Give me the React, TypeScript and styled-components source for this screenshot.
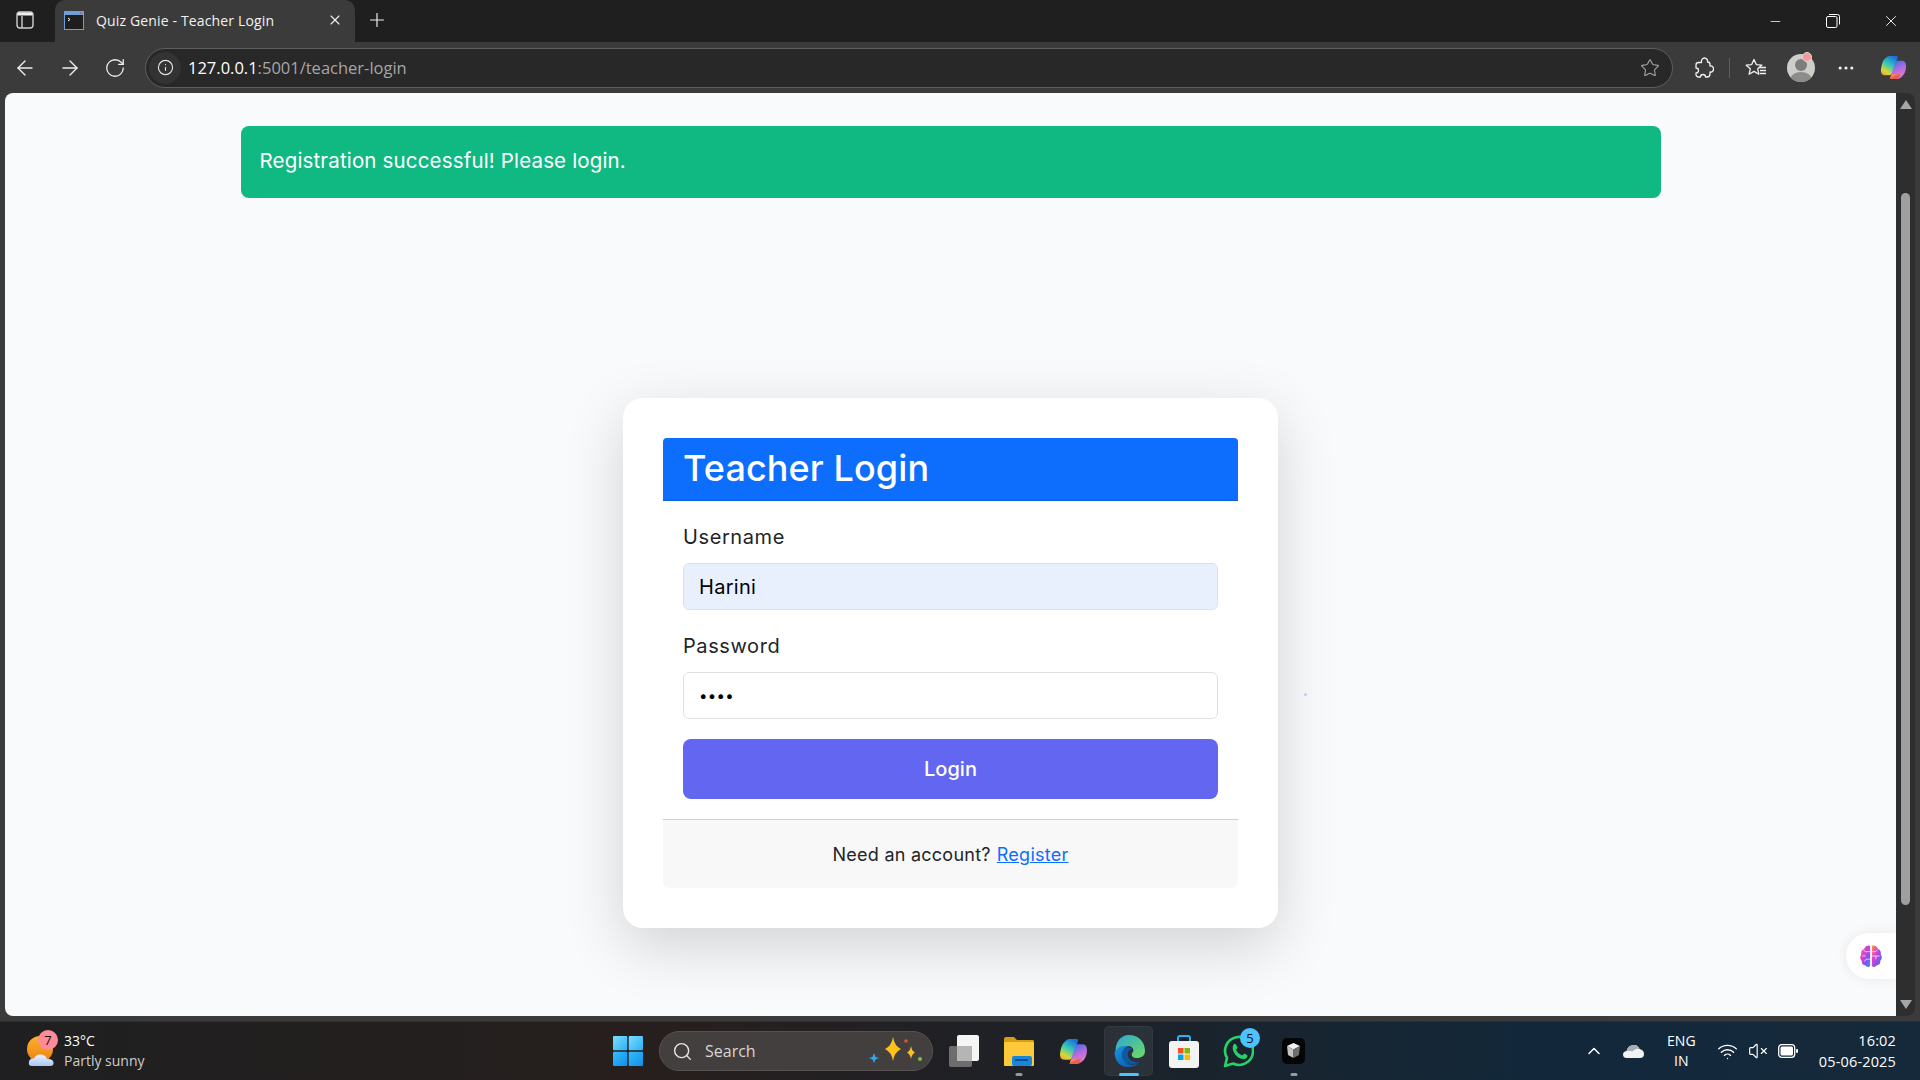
import React, { useId } from "react";
import styled, { createGlobalStyle } from "styled-components";
import {
  ArrowLeft,
  ArrowRight,
  ChevronUp,
  Info,
  Minus,
  MoreHorizontal,
  Plus,
  RotateCw,
  Search,
  Star,
  VolumeX,
  Wifi,
  X,
} from "lucide-react";

const GlobalStyle = createGlobalStyle`
  html, body {
    margin: 0;
    padding: 0;
    height: 100%;
    overflow: hidden;
    background: #3b3b3b;
  }
  * { box-sizing: border-box; }
`;

const pageFont = `Inter, "Noto Sans", sans-serif`;
const shellFont = `"Open Sans", "Noto Sans", sans-serif`;

const Screen = styled.div`
  width: 1920px;
  height: 1080px;
  display: flex;
  flex-direction: column;
  overflow: hidden;
  font-family: ${shellFont};
`;

/* browser chrome */
const TabStrip = styled.div`
  height: 42px;
  flex: none;
  background: #1f1f1f;
  display: flex;
  align-items: stretch;
  color: #fff;
`;

const SideToggle = styled.div`
  width: 55px;
  display: flex;
  align-items: center;
  justify-content: center;
  padding: 0 6px 2px 0;
`;

const Tab = styled.div`
  width: 300px;
  background: #3b3b3b;
  border-radius: 10px 10px 0 0;
  display: flex;
  align-items: center;
  padding: 0 12px 2px 9px;
  gap: 12px;
`;

const TabTitle = styled.span`
  flex: 1;
  font-size: 14px;
  color: #f2f2f2;
  letter-spacing: 0.15px;
  white-space: nowrap;
`;

const NewTab = styled.div`
  width: 44px;
  display: flex;
  align-items: center;
  justify-content: center;
  padding-bottom: 2px;
`;

const WindowControls = styled.div`
  margin-left: auto;
  display: flex;
  align-items: center;
`;

const WindowButton = styled.div`
  width: 58px;
  height: 40px;
  display: flex;
  align-items: center;
  justify-content: center;
`;

const Toolbar = styled.div`
  height: 51px;
  flex: none;
  background: #3b3b3b;
  display: flex;
  align-items: center;
  color: #f0f0f0;
`;

const NavButton = styled.div<{ $w: number }>`
  width: ${(p) => p.$w}px;
  height: 40px;
  flex: none;
  display: flex;
  align-items: center;
  justify-content: center;
  position: relative;
`;

const AddressBar = styled.div`
  width: 1528px;
  height: 40px;
  margin: 0 6px 0 5px;
  flex: none;
  background: #282828;
  border: 1px solid #5e5e5e;
  border-radius: 20px;
  display: flex;
  align-items: center;
  padding: 0 12px 0 3px;
`;

const SiteInfo = styled.div`
  width: 32px;
  height: 32px;
  border-radius: 50%;
  background: #333;
  display: flex;
  align-items: center;
  justify-content: center;
  margin-right: 7px;
`;

const Url = styled.div`
  flex: 1;
  font-size: 16.5px;
  color: #a6a6a6;
  white-space: nowrap;
`;

const UrlHost = styled.span`
  color: #fff;
`;

const ToolbarDivider = styled.div`
  width: 1px;
  height: 20px;
  background: #5e5e5e;
  flex: none;
`;

const Avatar = styled.div`
  width: 28px;
  height: 28px;
  border-radius: 50%;
  background: #cfcdc9;
  overflow: hidden;
  display: flex;
`;

const AvatarDot = styled.div`
  position: absolute;
  top: 4px;
  right: 8px;
  width: 10px;
  height: 10px;
  border-radius: 50%;
  background: #f59a9a;
  border: 1px solid #d9d9d9;
`;

/* web page */
const Viewport = styled.div`
  flex: 1;
  min-height: 0;
  display: flex;
  padding: 0 5px 5px 5px;
  background: #3b3b3b;
`;

const Page = styled.main`
  flex: 1;
  background: #f9fafc;
  border-radius: 8px 0 0 8px;
  padding-top: 33px;
  position: relative;
  font-family: ${pageFont};
  overflow: hidden;
`;

const Alert = styled.div`
  width: 1420px;
  height: 72px;
  margin: 0 auto;
  background: #10b981;
  border-radius: 8px;
  color: #fff;
  font-size: 20.5px;
  line-height: 70px;
  letter-spacing: 0.16px;
  padding-left: 19px;
`;

const Card = styled.section`
  width: 655px;
  margin: 200px auto 0;
  background: #fff;
  border-radius: 20px;
  padding: 40px;
  box-shadow: 0 18px 60px rgba(0, 0, 0, 0.16);
`;

const CardHeader = styled.h1`
  margin: 0;
  height: 63px;
  background: #0d6efd;
  border-radius: 4px 4px 0 0;
  color: #fff;
  font-size: 36px;
  font-weight: 500;
  line-height: 61px;
  padding-left: 20px;
  letter-spacing: 0.1px;
  border-bottom: 1px solid #0b62e0;
`;

const CardBody = styled.div`
  padding: 20px;
`;

const Field = styled.div`
  margin-bottom: 20px;
`;

const Label = styled.label`
  display: block;
  height: 30px;
  line-height: 32px;
  margin-bottom: 12px;
  font-size: 20px;
  letter-spacing: 0.6px;
  color: #212529;
`;

const Input = styled.input<{ $filled?: boolean; $masked?: boolean }>`
  display: block;
  width: 100%;
  height: 47px;
  border: 1px solid #dee2e6;
  border-radius: 6px;
  padding: 0 15px;
  font-family: ${pageFont};
  font-size: ${(p) => (p.$masked ? 15 : 20)}px;
  letter-spacing: 0.3px;
  color: #000;
  background: ${(p) => (p.$filled ? "#e8f0fe" : "#fff")};
  outline: none;
`;

const LoginButton = styled.button`
  display: block;
  width: 100%;
  height: 60px;
  border: 0;
  border-radius: 8px;
  background: #6366f1;
  color: #fff;
  font-family: ${pageFont};
  font-size: 20px;
  font-weight: 500;
`;

const CardFooter = styled.div`
  height: 69px;
  background: #f8f8f8;
  border-top: 1px solid #cfcfcf;
  border-radius: 0 0 6px 6px;
  display: flex;
  align-items: center;
  justify-content: center;
  gap: 6px;
  font-size: 18px;
  letter-spacing: 0.25px;
  color: #212529;
`;

const RegisterLink = styled.a`
  color: #0d6efd;
  text-decoration: underline;
`;

const BrainTab = styled.div`
  position: absolute;
  right: 0;
  top: 840px;
  width: 50px;
  height: 46px;
  background: #fff;
  border-radius: 23px 0 0 23px;
  box-shadow: 0 0 12px rgba(0, 0, 0, 0.08);
  display: flex;
  align-items: center;
  justify-content: center;
`;

const StrayDot = styled.div`
  position: absolute;
  left: 1299px;
  top: 600px;
  width: 3px;
  height: 3px;
  border-radius: 50%;
  background: #c3cdf3;
`;

const Scrollbar = styled.div`
  width: 19px;
  flex: none;
  background: #2e2e2e;
  border-radius: 0 8px 8px 0;
  display: flex;
  flex-direction: column;
  align-items: center;
  justify-content: space-between;
  padding: 7px 0;
`;

const ScrollThumb = styled.div`
  flex: 1;
  width: 9px;
  margin: 84px 0 95px;
  border-radius: 5px;
  background: #9f9f9f;
`;

const ScrollArrow = styled.div<{ $down?: boolean }>`
  width: 0;
  height: 0;
  border-left: 6.5px solid transparent;
  border-right: 6.5px solid transparent;
  ${(p) =>
    p.$down
      ? "border-top: 9px solid #a5a5a5;"
      : "border-bottom: 9px solid #a5a5a5;"}
`;

/* taskbar */
const Taskbar = styled.footer`
  height: 59px;
  flex: none;
  background: linear-gradient(90deg, #1f1f21 0%, #271f1e 35%, #1c2229 58%, #12283a 80%, #15293a 100%);
  display: grid;
  grid-template-columns: 600px auto 1fr;
  align-items: center;
  color: #fff;
  border-top: 1px solid #2e2e2e;
`;

const Weather = styled.div`
  display: flex;
  align-items: center;
  padding-left: 27px;
  gap: 9px;
`;

const WeatherIcon = styled.div`
  width: 28px;
  height: 40px;
  position: relative;
  flex: none;
`;

const AlertBadge = styled.div`
  position: absolute;
  top: -1px;
  left: 11px;
  width: 20px;
  height: 20px;
  border-radius: 50%;
  background: #ff8a98;
  color: #111;
  font-size: 13px;
  text-align: center;
  line-height: 20px;
`;

const WeatherText = styled.div`
  font-size: 14px;
  line-height: 20px;
`;

const WeatherSub = styled.div`
  color: #cdcdcd;
`;

const TaskCenter = styled.div`
  display: flex;
  align-items: center;
`;

const TaskSlot = styled.div<{ $active?: boolean }>`
  width: 55px;
  height: 50px;
  display: flex;
  align-items: center;
  justify-content: center;
  position: relative;
  &::before {
    content: "";
    position: absolute;
    inset: 0 3px;
    border-radius: 5px;
    ${(p) =>
      p.$active
        ? "background: rgba(255,255,255,0.07); box-shadow: inset 0 0 0 1px rgba(255,255,255,0.04);"
        : ""}
  }
  > svg {
    position: relative;
  }
`;

const RunningMark = styled.div<{ $active?: boolean }>`
  position: absolute;
  bottom: 0;
  left: 50%;
  transform: translateX(-50%);
  height: 3px;
  border-radius: 2px;
  width: ${(p) => (p.$active ? 20 : 7)}px;
  background: ${(p) => (p.$active ? "#4cc2ff" : "#9a9a9a")};
`;

const CountBadge = styled.div`
  position: absolute;
  top: 2px;
  right: 6px;
  width: 20px;
  height: 20px;
  border-radius: 50%;
  background: #4cc2ff;
  color: #111;
  font-size: 13px;
  text-align: center;
  line-height: 20px;
`;

const SearchPill = styled.div`
  width: 274px;
  height: 40px;
  margin: 0 3px 0 4px;
  border-radius: 20px;
  background: #433f3f;
  border: 1px solid #565252;
  display: flex;
  align-items: center;
  padding: 0 8px 0 12px;
  gap: 12px;
  font-size: 16px;
  color: #d6d6d6;
`;

const SearchHint = styled.div`
  margin-left: auto;
  display: flex;
`;

const Tray = styled.div`
  display: flex;
  align-items: center;
  justify-content: flex-end;
  padding-right: 24px;
`;

const TrayItem = styled.div<{ $w: number }>`
  width: ${(p) => p.$w}px;
  display: flex;
  align-items: center;
  justify-content: center;
`;

const Lang = styled.div`
  font-size: 14px;
  line-height: 20px;
  text-align: center;
`;

const Clock = styled.div`
  font-size: 14.5px;
  line-height: 21px;
  text-align: right;
  margin-left: 14px;
  letter-spacing: 0.15px;
`;

const WeatherArtBox = styled.svg`
  position: absolute;
  inset: 0;
`;

/* drawn icons */
function SidebarIcon() {
  return (
    <svg width="18" height="18" viewBox="0 0 18 18" fill="none">
      <rect x="1" y="1" width="16" height="16" rx="3" stroke="#cfcfcf" strokeWidth="1.4" />
      <path d="M1.5 4.5V3.5a2 2 0 0 1 2-2H14.5a2 2 0 0 1 2 2V4.5Z" fill="#f0f0f0" />
      <path d="M6 5V17" stroke="#cfcfcf" strokeWidth="1.4" />
    </svg>
  );
}

function Favicon() {
  return (
    <svg width="20" height="19" viewBox="0 0 20 19">
      <rect x="0.5" y="0.5" width="19" height="18" fill="#1e1e1e" stroke="#6f9fd8" />
      <rect x="1" y="1" width="18" height="3" fill="#6f9fd8" />
      <rect x="16" y="1" width="2" height="2" fill="#e05a5a" />
      <path d="M4 7L6 8.5L4 10" stroke="#fff" strokeWidth="1" fill="none" />
    </svg>
  );
}

function RestoreIcon() {
  return (
    <svg width="14" height="14" viewBox="0 0 14 14" fill="none" stroke="#fff" strokeWidth="1">
      <rect x="0.5" y="2.5" width="10.5" height="11" rx="1.5" />
      <path d="M3 0.5H11.5a2 2 0 0 1 2 2V10.5" />
    </svg>
  );
}

function ExtensionsIcon() {
  return (
    <svg width="20" height="21" viewBox="0 0 20 21" fill="none" stroke="#f0f0f0" strokeWidth="1.3" strokeLinejoin="round">
      <path d="M4.5 5.5H7.5C7 3 8.5 1 10.5 1S14 3 13.5 5C15 5 16 6 16 7.5V9C18 8.5 19.5 10 19.5 12S18 15.5 16 15V17C16 19 15 20 13 20H11.5C11.5 18.5 10.5 17.5 9 17.5S6.5 18.5 6.5 20H4.5C3 20 2 19 2 17.5V16C3.5 16 4.5 15 4.5 13.5S3.5 11 2 11V8C2 6.5 3 5.5 4.5 5.5Z" />
    </svg>
  );
}

function FavoritesIcon() {
  return (
    <svg width="22" height="20" viewBox="0 0 22 20" fill="none" stroke="#f0f0f0" strokeWidth="1.3" strokeLinejoin="round">
      <path d="M9 1.5L11.3 6.6L16.8 7.2L12.7 10.8L13.9 16.2L9 13.4L4.1 16.2L5.3 10.8L1.2 7.2L6.7 6.6Z" />
      <path d="M14 9.5H21M15 12.5H21M15 15.5H21" />
    </svg>
  );
}

function AvatarFigure() {
  return (
    <svg width="28" height="28" viewBox="0 0 28 28">
      <circle cx="14" cy="11" r="6" fill="#7d7d7d" />
      <ellipse cx="14" cy="25" rx="10.5" ry="7" fill="#8c8c8c" />
    </svg>
  );
}

function CopilotIcon({ size }: { size: number }) {
  const id = useId();
  return (
    <svg width={size} height={size} viewBox="0 0 28 28">
      <defs>
        <linearGradient id={`${id}a`} x1="0.7" y1="0" x2="0.2" y2="1">
          <stop offset="0" stopColor="#1a6fe0" />
          <stop offset="0.45" stopColor="#35c9b4" />
          <stop offset="0.8" stopColor="#d5d83a" />
          <stop offset="1" stopColor="#f2a63a" />
        </linearGradient>
        <linearGradient id={`${id}b`} x1="0.3" y1="0" x2="0.7" y2="1">
          <stop offset="0" stopColor="#3b6ee8" />
          <stop offset="0.45" stopColor="#b06be0" />
          <stop offset="1" stopColor="#f07cc0" />
        </linearGradient>
        <linearGradient id={`${id}c`} x1="0" y1="0" x2="1" y2="1">
          <stop offset="0" stopColor="#f8c24a" />
          <stop offset="0.5" stopColor="#f0603e" />
          <stop offset="1" stopColor="#d84fa0" />
        </linearGradient>
      </defs>
      <path d="M10 2H17Q19 2 18 5L13 19Q12 22 9 22H5Q0.5 22 1 16Q2 7 6 4Q8 2 10 2Z" fill={`url(#${id}a)`} />
      <path d="M18 7H23Q27 7 27 13Q27 20 22 24Q20 26 17 26H12Q10 26 11 23L16 9Q16.5 7 18 7Z" fill={`url(#${id}b)`} />
      <path d="M10 26H17Q19.5 26 20.5 24L21 21H14Q12 21 11.5 22.5L10.5 25Z" fill={`url(#${id}c)`} />
    </svg>
  );
}

function BrainIcon() {
  const id = useId();
  return (
    <svg width="26" height="26" viewBox="0 0 24 24">
      <defs>
        <linearGradient id={id} x1="0" y1="0" x2="1" y2="1">
          <stop offset="0" stopColor="#ff9a2e" />
          <stop offset="0.35" stopColor="#e23fd0" />
          <stop offset="0.7" stopColor="#7a55f0" />
          <stop offset="1" stopColor="#3f8ef5" />
        </linearGradient>
      </defs>
      <path d="M11.2 2.5V21.5Q8.5 23 6.5 20.5Q3 20 3.5 16.5Q0.8 13.5 3 10.5Q2.3 6.5 5.5 5.5Q7.5 1.5 11.2 2.5Z" fill={`url(#${id})`} />
      <path d="M12.8 2.5V21.5Q15.5 23 17.5 20.5Q21 20 20.5 16.5Q23.2 13.5 21 10.5Q21.7 6.5 18.5 5.5Q16.5 1.5 12.8 2.5Z" fill={`url(#${id})`} />
      <path d="M11 8H7L5 6.5M11 15H7.5L6 17M4 12H7M13 8H16L18 6.5M13 12H20M16.5 12V15" stroke="#fff" strokeWidth="0.8" fill="none" opacity="0.8" />
    </svg>
  );
}

function WeatherArt() {
  return (
    <WeatherArtBox width="28" height="40" viewBox="0 0 28 40">
      <defs>
        <linearGradient id="sun" x1="0" y1="0" x2="0" y2="1">
          <stop offset="0" stopColor="#fbb428" />
          <stop offset="1" stopColor="#ee7f14" />
        </linearGradient>
        <linearGradient id="cloud" x1="0" y1="0" x2="0" y2="1">
          <stop offset="0" stopColor="#eef4ff" />
          <stop offset="1" stopColor="#a9c6f2" />
        </linearGradient>
      </defs>
      <circle cx="13" cy="18" r="13" fill="url(#sun)" />
      <path d="M5 35Q1 35 2 30.5Q3 27 7 27.5Q9 23 14 23.5Q19 24 20 28Q26 27.5 26.5 31.5Q27 35 23 35Z" fill="url(#cloud)" />
    </WeatherArtBox>
  );
}

function WindowsLogo() {
  return (
    <svg width="30" height="30" viewBox="0 0 30 30">
      <defs>
        <linearGradient id="winTop" x1="0" y1="0" x2="1" y2="1">
          <stop offset="0" stopColor="#7fdcff" />
          <stop offset="1" stopColor="#2bb1f5" />
        </linearGradient>
        <linearGradient id="winBottom" x1="0" y1="0" x2="1" y2="1">
          <stop offset="0" stopColor="#35bdfb" />
          <stop offset="1" stopColor="#0f8fe8" />
        </linearGradient>
      </defs>
      <rect x="0" y="0" width="14.3" height="14.3" rx="1" fill="url(#winTop)" />
      <rect x="15.7" y="0" width="14.3" height="14.3" rx="1" fill="url(#winTop)" />
      <rect x="0" y="15.7" width="14.3" height="14.3" rx="1" fill="url(#winBottom)" />
      <rect x="15.7" y="15.7" width="14.3" height="14.3" rx="1" fill="url(#winBottom)" />
    </svg>
  );
}

function SearchSparkles() {
  return (
    <svg width="56" height="34" viewBox="0 0 56 34">
      <path d="M25 3Q26.5 12 33 15Q26.5 18 25 27Q23.5 18 17 15Q23.5 12 25 3Z" fill="#fcc21b" />
      <path d="M43 12Q43.8 17 47 18.5Q43.8 20 43 25Q42.2 20 39 18.5Q42.2 17 43 12Z" fill="#fcc21b" />
      <path d="M6 19L7.5 23L11 24L7.5 25.5L6 29L4.5 25.5L1 24L4.5 23Z" fill="#35a7ef" />
      <circle cx="38" cy="7" r="1.8" fill="#d9572b" />
      <circle cx="52" cy="25" r="2" fill="#7cc142" />
    </svg>
  );
}

function TaskViewIcon() {
  return (
    <svg width="30" height="32" viewBox="0 0 30 32">
      <rect x="0" y="11" width="23" height="21" rx="2" fill="#6d6d6d" />
      <rect x="8" y="0" width="22" height="26" rx="2" fill="#f5f5f5" />
      <rect x="8" y="11" width="15" height="15" fill="#b5b5b5" />
    </svg>
  );
}

function FolderIcon() {
  return (
    <svg width="30" height="30" viewBox="0 0 30 30">
      <path d="M0 3Q0 1 2 1H10L13 4H29Q30 4 30 6V10H0Z" fill="#d89c12" />
      <rect x="0" y="6" width="30" height="24" rx="1" fill="#fcc93a" />
      <rect x="8" y="20" width="20" height="10" rx="2" fill="#1a86d8" />
      <rect x="11" y="23" width="13" height="2" fill="#0d4f96" />
    </svg>
  );
}

function EdgeIcon() {
  return (
    <svg width="32" height="32" viewBox="0 0 32 32">
      <defs>
        <linearGradient id="edgeTop" x1="0" y1="0" x2="1" y2="1">
          <stop offset="0" stopColor="#2ba6d6" />
          <stop offset="1" stopColor="#6fdc62" />
        </linearGradient>
        <linearGradient id="edgeBody" x1="0" y1="0" x2="1" y2="1">
          <stop offset="0" stopColor="#1b96e0" />
          <stop offset="1" stopColor="#0c4fa8" />
        </linearGradient>
      </defs>
      <path d="M16 0C26 0 32 7 32 16C32 21 28 23 24 23C20 23 18 21 19 18C22 16 20 11 15 11C9 11 5 15 3 20C1 8 7 0 16 0Z" fill="url(#edgeTop)" />
      <path d="M1.5 18C3 13 9 9.500 15 11C9 14 8 20 11 25C14 30 20 31 26 28C22 32 18 32 15 32C7 32 2 26 1.5 18Z" fill="url(#edgeBody)" />
      <path d="M12 13C7 17 8 25 14 28C19 30 24 29 27 27C22 28 16 26 15 21C14.5 18 15 15 19 14C17 12 14 12 12 13Z" fill="#0c59a4" />
    </svg>
  );
}

function StoreIcon() {
  return (
    <svg width="30" height="33" viewBox="0 0 30 33">
      <path d="M9 7V3Q9 1 11 1H19Q21 1 21 3V7" fill="none" stroke="#2bb1f5" strokeWidth="2" />
      <rect x="0" y="6" width="30" height="27" rx="3" fill="#f3f3f3" />
      <rect x="9" y="13" width="5.5" height="5.5" fill="#f25022" />
      <rect x="15.5" y="13" width="5.5" height="5.5" fill="#7fba00" />
      <rect x="9" y="19.5" width="5.5" height="5.5" fill="#00a4ef" />
      <rect x="15.5" y="19.5" width="5.5" height="5.5" fill="#ffb900" />
    </svg>
  );
}

function WhatsAppIcon() {
  return (
    <svg width="31" height="33" viewBox="0 0 31 33" fill="none">
      <path d="M2 31L4 23A14 14 0 1 1 10 28.5Z" stroke="#25d366" strokeWidth="2.6" strokeLinejoin="round" />
      <path d="M10.5 9.5Q12 8 13 9.5L14.5 12.5L13 15Q15 19 19 20.5L21.5 18.5L24.5 20.5Q24.5 23 21.5 24Q15 24 11.5 18.5Q8.5 13 10.5 9.5Z" fill="#25d366" />
    </svg>
  );
}

function AppCube() {
  return (
    <svg width="23" height="26" viewBox="0 0 23 26">
      <rect x="0" y="0" width="23" height="26" rx="5" fill="#050505" />
      <path d="M11.5 5L18 8L11.500 11.500L5 8Z" fill="#f2f2f2" />
      <path d="M5 8L11.500 11.500L11.500 20L6 17Z" fill="#c4c4c4" />
      <path d="M18 8L11.500 11.500L11.500 20L17 17Z" fill="#6f6f6f" />
    </svg>
  );
}

function CloudIcon() {
  return (
    <svg width="21" height="14" viewBox="0 0 21 14">
      <path d="M4 14Q0 14 0 10.5Q0 7.5 3.5 7Q5 1 11 1Q15 1 16.5 5Q21 6 21 10Q21 14 17 14Z" fill="#f2f2f2" />
      <path d="M3.5 7Q5 1 11 1Q15 1 16.5 5Q12 4 9.5 7.5Q6 6.5 3.5 7Z" fill="#a8adb3" />
    </svg>
  );
}

function BatteryIcon() {
  return (
    <svg width="20" height="14" viewBox="0 0 20 14">
      <rect x="0.7" y="0.7" width="16" height="12.6" rx="3" fill="none" stroke="#fff" strokeWidth="1.3" />
      <rect x="2.5" y="2.5" width="12.5" height="9" rx="1.5" fill="#fff" />
      <rect x="18" y="5" width="2" height="4" rx="1" fill="#fff" />
    </svg>
  );
}

export default function App() {
  return (
    <>
      <GlobalStyle />
      <Screen>
        <TabStrip>
          <SideToggle>
            <SidebarIcon />
          </SideToggle>
          <Tab>
            <Favicon />
            <TabTitle>Quiz Genie - Teacher Login</TabTitle>
            <X size={16} color="#f0f0f0" strokeWidth={1.6} />
          </Tab>
          <NewTab>
            <Plus size={22} color="#f0f0f0" strokeWidth={1.3} />
          </NewTab>
          <WindowControls>
            <WindowButton>
              <Minus size={15} color="#fff" strokeWidth={1.2} />
            </WindowButton>
            <WindowButton>
              <RestoreIcon />
            </WindowButton>
            <WindowButton>
              <X size={18} color="#fff" strokeWidth={1.2} />
            </WindowButton>
          </WindowControls>
        </TabStrip>

        <Toolbar>
          <NavButton $w={50}>
            <ArrowLeft size={24} strokeWidth={1.4} />
          </NavButton>
          <NavButton $w={40}>
            <ArrowRight size={24} strokeWidth={1.4} />
          </NavButton>
          <NavButton $w={50}>
            <RotateCw size={22} strokeWidth={1.4} />
          </NavButton>
          <AddressBar>
            <SiteInfo>
              <Info size={17} strokeWidth={1.6} color="#e4e4e4" />
            </SiteInfo>
            <Url>
              <UrlHost>127.0.0.1</UrlHost>:5001/teacher-login
            </Url>
            <Star size={20} strokeWidth={1.3} color="#a6a6a6" />
          </AddressBar>
          <NavButton $w={50}>
            <ExtensionsIcon />
          </NavButton>
          <ToolbarDivider />
          <NavButton $w={52}>
            <FavoritesIcon />
          </NavButton>
          <NavButton $w={38}>
            <Avatar>
              <AvatarFigure />
            </Avatar>
            <AvatarDot />
          </NavButton>
          <NavButton $w={52}>
            <MoreHorizontal size={20} strokeWidth={1.8} />
          </NavButton>
          <NavButton $w={42}>
            <CopilotIcon size={27} />
          </NavButton>
        </Toolbar>

        <Viewport>
          <Page>
            <Alert>Registration successful! Please login.</Alert>
            <Card>
              <CardHeader>Teacher Login</CardHeader>
              <CardBody>
                <Field>
                  <Label>Username</Label>
                  <Input $filled readOnly value="Harini" />
                </Field>
                <Field>
                  <Label>Password</Label>
                  <Input $masked readOnly type="password" value="abcd" />
                </Field>
                <LoginButton>Login</LoginButton>
              </CardBody>
              <CardFooter>
                Need an account? <RegisterLink href="#">Register</RegisterLink>
              </CardFooter>
            </Card>
            <StrayDot />
            <BrainTab>
              <BrainIcon />
            </BrainTab>
          </Page>
          <Scrollbar>
            <ScrollArrow />
            <ScrollThumb />
            <ScrollArrow $down />
          </Scrollbar>
        </Viewport>

        <Taskbar>
          <Weather>
            <WeatherIcon>
              <WeatherArt />
              <AlertBadge>7</AlertBadge>
            </WeatherIcon>
            <WeatherText>
              33°C
              <WeatherSub>Partly sunny</WeatherSub>
            </WeatherText>
          </Weather>
          <TaskCenter>
            <TaskSlot>
              <WindowsLogo />
            </TaskSlot>
            <SearchPill>
              <Search size={21} strokeWidth={1.6} color="#e6e6e6" />
              Search
              <SearchHint>
                <SearchSparkles />
              </SearchHint>
            </SearchPill>
            <TaskSlot>
              <TaskViewIcon />
            </TaskSlot>
            <TaskSlot>
              <FolderIcon />
              <RunningMark />
            </TaskSlot>
            <TaskSlot>
              <CopilotIcon size={29} />
            </TaskSlot>
            <TaskSlot $active>
              <EdgeIcon />
              <RunningMark $active />
            </TaskSlot>
            <TaskSlot>
              <StoreIcon />
            </TaskSlot>
            <TaskSlot>
              <WhatsAppIcon />
              <CountBadge>5</CountBadge>
            </TaskSlot>
            <TaskSlot>
              <AppCube />
              <RunningMark />
            </TaskSlot>
          </TaskCenter>
          <Tray>
            <TrayItem $w={40}>
              <ChevronUp size={20} strokeWidth={1.8} />
            </TrayItem>
            <TrayItem $w={39}>
              <CloudIcon />
            </TrayItem>
            <TrayItem $w={57}>
              <Lang>
                ENG
                <br />
                IN
              </Lang>
            </TrayItem>
            <TrayItem $w={35}>
              <Wifi size={21} strokeWidth={1.6} />
            </TrayItem>
            <TrayItem $w={26}>
              <VolumeX size={20} strokeWidth={1.4} />
            </TrayItem>
            <TrayItem $w={34}>
              <BatteryIcon />
            </TrayItem>
            <Clock>
              16:02
              <br />
              05-06-2025
            </Clock>
          </Tray>
        </Taskbar>
      </Screen>
    </>
  );
}
